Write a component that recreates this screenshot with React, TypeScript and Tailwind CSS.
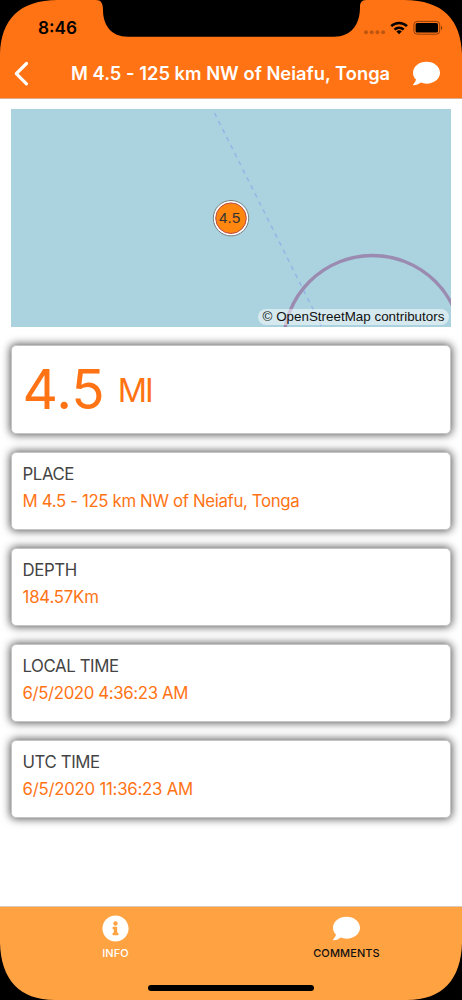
import React from "react";
import { FaComment, FaInfoCircle } from "react-icons/fa";

const details = [
  { label: "PLACE", value: "M 4.5 - 125 km NW of Neiafu, Tonga", valueCls: "tracking-[-0.34px]" },
  { label: "DEPTH", value: "184.57Km", valueCls: "tracking-[-0.2px]" },
  { label: "LOCAL TIME", value: "6/5/2020 4:36:23 AM", valueCls: "tracking-[-0.36px]" },
  { label: "UTC TIME", value: "6/5/2020 11:36:23 AM", valueCls: "tracking-[-0.24px]" },
];

function StatusIcons() {
  return (
    <svg width="82" height="18" viewBox="363 19 82 18" className="shrink-0">
      <g fill="#000" fillOpacity="0.25">
        <circle cx="366" cy="32.3" r="2" />
        <circle cx="371.7" cy="32.3" r="2" />
        <circle cx="377.4" cy="32.3" r="2" />
        <circle cx="383.1" cy="32.3" r="2" />
      </g>
      <g fill="none" stroke="#000" strokeWidth="2.5">
        <path d="M391.2 26.2a11.2 11.2 0 0 1 15.8 0" />
        <path d="M394.5 29.6a6.5 6.5 0 0 1 9.2 0" />
      </g>
      <path d="M396.4 31.4a4 4 0 0 1 5.4 0L399.1 34.2z" fill="#000" />
      <rect x="413.9" y="21.4" width="25.8" height="12.8" rx="3.3" fill="none" stroke="#000" strokeOpacity="0.45" />
      <rect x="415.6" y="23.1" width="22.4" height="9.4" rx="1.6" fill="#000" />
      <path d="M441 25.7c1.7.8 1.7 3.4 0 4.2z" fill="#000" fillOpacity="0.5" />
    </svg>
  );
}

function PhoneFrame() {
  return (
    <svg className="pointer-events-none absolute inset-0" width="462" height="1000" viewBox="0 0 462 1000">
      <path d="M0 0H462V54C461 20 443 0 404 0H366C361.500 0 360 3 360 7C360 25 351 36.700 334 36.700H128C111 36.700 103 25 103 10C103 3 101 0 96 0H58C19 0 1 20 0 54Z" />
      <path d="M0 943C1 979 19 1000 55 1000H0ZM462 943C461 979 443 1000 407 1000H462Z" />
    </svg>
  );
}

function QuakeMap() {
  return (
    <div className="relative h-[218px] overflow-hidden bg-[#aad3df]">
      <svg width="440" height="218" className="block">
        <path d="M203.500 4L310.500 217" stroke="#97b4e6" strokeWidth="1.5" strokeDasharray="4.500 4.500" />
        <circle cx="361.500" cy="235.500" r="89" fill="none" stroke="#9b8bb0" strokeWidth="3.400" />
        <circle cx="220" cy="109.200" r="17.700" fill="#fff" stroke="#777e80" strokeWidth="1" />
        <circle cx="220" cy="109.200" r="15.300" fill="#ff870f" stroke="#b94d4b" strokeWidth="1" />
      </svg>
      <span className="absolute left-[208px] top-[99px] font-['Liberation_Sans'] text-[15px] leading-5 tracking-[0.2px] text-[#333]">4.5</span>
      <div className="absolute bottom-[2px] right-[2px] flex h-4 w-[191px] items-center justify-center whitespace-nowrap rounded-full bg-white/50 font-['Liberation_Sans'] text-[13.400px] text-[#111]">
        © OpenStreetMap contributors
      </div>
    </div>
  );
}

const cardClass = "rounded-[5px] border border-[#c4c4c4] bg-white px-[10.500px] shadow-[0_0_9px_1px_rgba(0,0,0,0.65)]";

export default function App() {
  return (
    <div className="relative flex h-[1000px] w-[462px] flex-col overflow-hidden bg-white font-['Inter',sans-serif]">
      <header className="h-[98.500px] shrink-0 border-b border-[#d9a98c] bg-[#ff7314]">
        <div className="flex h-[50px] items-start justify-between pl-[38px] pr-[17px] pt-[19px]">
          <span className="text-[17.200px] font-semibold leading-[18px] text-black">8:46</span>
          <StatusIcons />
        </div>
        <div className="flex h-[48px] items-center pl-[14px]">
          <svg width="16" height="26" viewBox="0 0 16 26" fill="none" stroke="#fff" strokeWidth="3.200" strokeLinecap="round" strokeLinejoin="round">
            <path d="M12.500 2.500L2.300 12.700L12.500 22.900" />
          </svg>
          <h1 className="ml-[41px] w-[321px] whitespace-nowrap text-[18.300px] font-semibold tracking-[0.04px] text-white">M 4.5 - 125 km NW of Neiafu, Tonga</h1>
          <FaComment size={27} className="mb-[2px] ml-[21px] shrink-0 text-white" />
        </div>
      </header>
      <main className="flex-1 px-[11px] pt-[10.500px]">
        <QuakeMap />
        <section className={cardClass + " mt-[18px] flex h-[89px] items-start text-[#ff7314]"}>
          <span className="mt-[9px] text-[55px] leading-[68px] tracking-[0px]">4.5</span>
          <span className="ml-[13px] mt-[25px] text-[32.500px] leading-[40px] tracking-[-2px]">MI</span>
        </section>
        {details.map((d) => (
          <section key={d.label} className={cardClass + " mt-[18px] h-[78px] whitespace-nowrap pt-[9px] text-[16.800px] leading-[24px]"}>
            <div className="tracking-[-0.4px] text-[#444]">{d.label}</div>
            <div className={d.valueCls + " mt-[3px] text-[#ff7314]"}>{d.value}</div>
          </section>
        ))}
      </main>
      <nav className="grid h-[94px] shrink-0 grid-cols-2 border-t border-[#dbc8bd] bg-[#ffa242]">
        <div className="flex flex-col items-center pt-[8px] text-white">
          <FaInfoCircle size={27} />
          <span className="mt-[3px] text-[11px] font-medium leading-4 tracking-[0.1px]">INFO</span>
        </div>
        <div className="flex flex-col items-center pt-[8px] text-[#111]">
          <FaComment size={27} className="text-white" />
          <span className="mt-[3px] text-[11px] font-medium leading-4 tracking-[0.1px]">COMMENTS</span>
        </div>
      </nav>
      <div className="absolute bottom-[9px] left-[148px] h-[6px] w-[166px] rounded-full bg-black" />
      <PhoneFrame />
    </div>
  );
}
